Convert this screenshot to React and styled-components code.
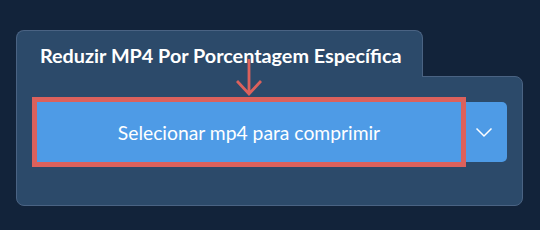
import React from 'react'
import styled, { createGlobalStyle } from 'styled-components'

const Global = createGlobalStyle`
html, body {
  margin: 0;
  padding: 0;
  background: #12233a;
  font-family: Lato, "Noto Sans", sans-serif;
}
`

const Page = styled.div`
width: 540px;
height: 230px;
box-sizing: border-box;
padding: 30px 17px 0 16px;
`

const Card = styled.div`
display: flex;
flex-direction: column;
width: 507px;
position: relative;
`

const Tab = styled.div`
align-self: flex-start;
box-sizing: border-box;
width: 407px;
height: 47px;
background: #2c4a6a;
border: 1px solid #4a6383;
border-bottom: none;
border-radius: 8px 8px 0 0;
padding: 12px 0 0 23px;
color: #ffffff;
font-weight: 700;
font-size: 19.8px;
position: relative;
z-index: 1;
margin-bottom: -1px;
`

const Body = styled.div`
box-sizing: border-box;
height: 130px;
background: #2c4a6a;
border: 1px solid #4a6383;
border-radius: 0 8px 8px 8px;
padding: 25px 15px 0 20px;
`

const SplitButton = styled.div`
display: flex;
height: 60px;
`

const MainButton = styled.button`
flex: 0 0 424px;
border: none;
background: #4e9be6;
color: #ffffff;
font-family: Lato, "Noto Sans", sans-serif;
font-size: 19.3px;
font-weight: 400;
outline: 5px solid #dc615c;
border-radius: 0;
position: relative;
z-index: 1;
`

const DropButton = styled.button`
flex: 1;
border: none;
background: #4e9be6;
border-radius: 0 5px 5px 0;
display: flex;
align-items: center;
justify-content: center;
padding: 0;
`

const Arrow = styled.svg`
position: absolute;
left: 220px;
top: 29px;
z-index: 2;
`

export default function App() {
  return (
    <>
      <Global />
      <Page>
        <Card>
          <Tab>Reduzir MP4 Por Porcentagem Específica</Tab>
          <Body>
            <SplitButton>
              <MainButton>Selecionar mp4 para comprimir</MainButton>
              <DropButton>
                <svg width="18" height="11" viewBox="0 0 18 11">
                  <path d="M1.5 1.5 L9 9 L16.5 1.5" fill="none" stroke="#ffffff" strokeWidth="1.5" />
                </svg>
              </DropButton>
            </SplitButton>
          </Body>
          <Arrow width="26" height="38" viewBox="0 0 26 38">
            <path d="M13 0 L13 35 M1 22 L13 35 L25 22" fill="none" stroke="#dc615c" strokeWidth="2.8" />
          </Arrow>
        </Card>
      </Page>
    </>
  )
}
